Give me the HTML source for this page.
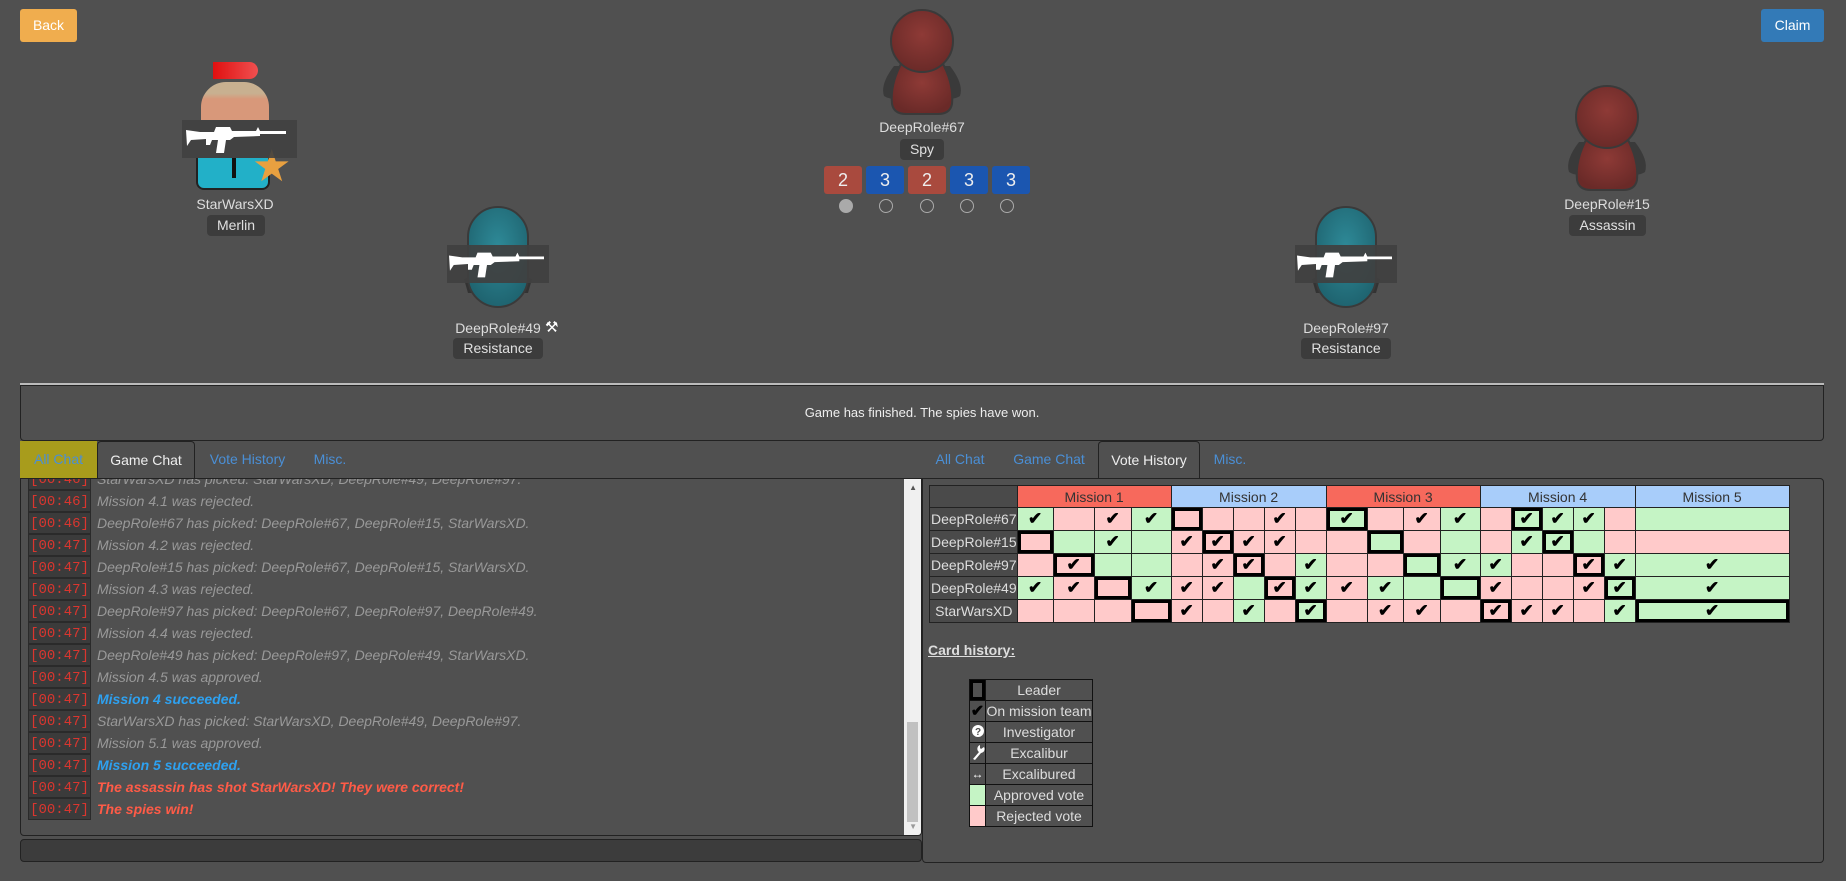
<!DOCTYPE html>
<html><head><meta charset="utf-8"><style>
*{box-sizing:border-box}
body{margin:0;width:1846px;height:881px;background:#505050;font-family:"Liberation Sans",sans-serif;color:#ddd;position:relative;overflow:hidden;font-size:14px}
.abs{position:absolute}
.btn{position:absolute;border-radius:3px;color:#fff;font-size:14px;text-align:center;line-height:33px}
.name{position:absolute;width:200px;text-align:center;font-size:14px;color:#ddd}
.lab{position:absolute;background:#3c3c3c;border-radius:4px;text-align:center;font-size:14px;color:#e0e0e0;height:21px;line-height:21px}
.mb{position:absolute;top:166px;width:38px;height:28px;border-radius:3px;color:#eee;font-size:18px;text-align:center;line-height:28px}
.mr{background:#a94a3e}.mbl{background:#1b56b0}
.dot{position:absolute;top:199px;width:14px;height:14px;border-radius:50%;border:1.5px solid #aaa}
.tab{position:absolute;top:441px;height:37px;line-height:37px;font-size:14px;color:#4a8fd6;text-align:center}
.tact{background:#505050;border:1px solid #222;border-bottom:none;border-radius:4px 4px 0 0;color:#eee}
.chat{position:absolute;left:20px;top:478px;width:902px;height:358px;border:1px solid #222;border-radius:0 0 4px 4px;overflow:hidden}
.row{position:absolute;left:7px;height:22px;line-height:22px;white-space:nowrap}
.ts{display:inline-block;width:63px;height:22px;background:#3b3b3b;border:1px solid #2a2a2a;color:#d9362f;font-family:"Liberation Mono",monospace;font-size:14px;text-align:center;vertical-align:top}
.tx{display:inline-block;padding-left:6px;font-style:italic;color:#999;font-size:14px}
.bl{color:#2ea1f0;font-weight:bold}.rd{color:#ff5b47;font-weight:bold}
table.v{position:absolute;left:929px;top:485px;border-collapse:collapse;table-layout:fixed}
table.v td{border:1px solid #222;height:23px;padding:0;text-align:center;font-size:17px;color:#000;font-weight:bold}
table.v td.n{background:#4a4a4a;color:#ddd;font-weight:normal;font-size:14px;text-align:left;padding-left:1px;white-space:nowrap;overflow:hidden}
table.v tr.h td{height:22px;font-weight:normal;font-size:14px;color:#333}
.g{background:#c5f4c5}.r{background:#ffcaca}
.L{box-shadow:inset 0 0 0 3px #000}
table.lg{position:absolute;left:969px;top:679px;border-collapse:collapse}
table.lg td{border:1px solid #111;height:21px;padding:0;font-size:14px;color:#ddd;text-align:center}
</style></head><body>
<div class="btn" style="left:20px;top:9px;width:57px;background:#f0ad4e">Back</div>
<div class="btn" style="left:1761px;top:9px;width:63px;background:#337ab7">Claim</div>

<svg width="0" height="0" style="position:absolute"><defs><radialGradient id="rg" cx="50%" cy="40%" r="60%"><stop offset="0" stop-color="#8e3a36"/><stop offset="1" stop-color="#6a2a28"/></radialGradient>
<radialGradient id="bg2" cx="50%" cy="40%" r="60%"><stop offset="0" stop-color="#2e8a98"/><stop offset="1" stop-color="#1f6470"/></radialGradient></defs></svg>

<svg class="abs" style="left:872px;top:4px" width="100" height="112" viewBox="0 0 100 112">
<path d="M22 62 Q8 80 12 92 Q18 96 26 94 L28 62 Z M78 62 Q92 80 88 92 Q82 96 74 94 L72 62 Z" fill="#3a3a3a"/>
<path d="M30 58 Q18 80 20 100 Q22 110 34 110 L66 110 Q78 110 80 100 Q82 80 70 58 Z" fill="url(#rg)" stroke="#3a3a3a" stroke-width="2"/>
<circle cx="50" cy="37" r="31" fill="url(#rg)" stroke="#3a3a3a" stroke-width="2"/>
</svg>
<div class="name" style="left:822px;top:119px">DeepRole#67</div>
<div class="lab" style="left:900px;top:139px;width:44px">Spy</div>
<div class="mb mr" style="left:824px">2</div><div class="mb mbl" style="left:866px">3</div><div class="mb mr" style="left:908px">2</div><div class="mb mbl" style="left:950px">3</div><div class="mb mbl" style="left:992px">3</div>
<div class="dot" style="left:839px;background:#aaa"></div><div class="dot" style="left:879px"></div><div class="dot" style="left:920px"></div><div class="dot" style="left:960px"></div><div class="dot" style="left:1000px"></div>

<svg class="abs" style="left:1557px;top:80px" width="100" height="112" viewBox="0 0 100 112">
<path d="M22 62 Q8 80 12 92 Q18 96 26 94 L28 62 Z M78 62 Q92 80 88 92 Q82 96 74 94 L72 62 Z" fill="#3a3a3a"/>
<path d="M30 58 Q18 80 20 100 Q22 110 34 110 L66 110 Q78 110 80 100 Q82 80 70 58 Z" fill="url(#rg)" stroke="#3a3a3a" stroke-width="2"/>
<circle cx="50" cy="37" r="31" fill="url(#rg)" stroke="#3a3a3a" stroke-width="2"/>
</svg>
<div class="name" style="left:1507px;top:196px">DeepRole#15</div>
<div class="lab" style="left:1569px;top:215px;width:77px">Assassin</div>

<div class="abs" style="left:213px;top:62px;width:45px;height:17px;background:linear-gradient(90deg,#e01010,#f05050);border-radius:0 9px 9px 0"></div>
<div class="abs" style="left:201px;top:82px;width:68px;height:38px;background:linear-gradient(#c8b090 0,#c8b090 30%,#d8987a 45%);border-radius:25px 25px 0 0"></div>
<div class="abs" style="left:196px;top:158px;width:74px;height:32px;background:#22b0c8;border-radius:0 0 8px 8px;border:2px solid #222;border-top:none"></div>
<div class="abs" style="left:232px;top:158px;width:4px;height:20px;background:#111"></div>
<div class="abs" style="left:252px;top:145px;font-size:44px;color:#e8a040;line-height:44px">★</div>
<div class="abs" style="left:182px;top:120px;width:115px;height:38px;background:rgba(64,64,64,.9)"></div>
<svg class="abs" style="left:186px;top:124px" width="100" height="32" viewBox="0 0 100 30"><path d="M0 5 L14 7 L28 7 L30 2 L44 2 L46 6 L70 6 L72 2 L74 6 L100 6 L100 9 L74 9 L74 11 L48 12 L44 15 L40 15 L38 28 L30 28 L32 15 L26 15 L24 20 L20 20 L20 14 L5 15 L1 21 Z" fill="#fff"/></svg>
<div class="name" style="left:135px;top:196px">StarWarsXD</div>
<div class="lab" style="left:207px;top:215px;width:58px">Merlin</div>

<svg class="abs" style="left:458px;top:205px" width="80" height="104" viewBox="0 0 80 104">
<path d="M6 74 L10 88 L18 88 L18 70 Z M74 74 L70 88 L62 88 L62 70 Z" fill="#333"/>
<rect x="10" y="2" width="60" height="100" rx="30" fill="url(#bg2)" stroke="#3a3a3a" stroke-width="2"/></svg>
<div class="abs" style="left:447px;top:245px;width:102px;height:38px;background:rgba(64,64,64,.92)"></div>
<svg class="abs" style="left:449px;top:249px" width="95" height="32" viewBox="0 0 100 30"><path d="M0 5 L14 7 L28 7 L30 2 L44 2 L46 6 L70 6 L72 2 L74 6 L100 6 L100 9 L74 9 L74 11 L48 12 L44 15 L40 15 L38 28 L30 28 L32 15 L26 15 L24 20 L20 20 L20 14 L5 15 L1 21 Z" fill="#fff"/></svg>
<div class="name" style="left:398px;top:320px">DeepRole#49</div>
<div class="abs" style="left:545px;top:318px;color:#fff;font-size:15px">⚒</div>
<div class="lab" style="left:453px;top:338px;width:90px">Resistance</div>

<svg class="abs" style="left:1306px;top:205px" width="80" height="104" viewBox="0 0 80 104">
<path d="M6 74 L10 88 L18 88 L18 70 Z M74 74 L70 88 L62 88 L62 70 Z" fill="#333"/>
<rect x="10" y="2" width="60" height="100" rx="30" fill="url(#bg2)" stroke="#3a3a3a" stroke-width="2"/></svg>
<div class="abs" style="left:1295px;top:245px;width:102px;height:38px;background:rgba(64,64,64,.92)"></div>
<svg class="abs" style="left:1297px;top:249px" width="95" height="32" viewBox="0 0 100 30"><path d="M0 5 L14 7 L28 7 L30 2 L44 2 L46 6 L70 6 L72 2 L74 6 L100 6 L100 9 L74 9 L74 11 L48 12 L44 15 L40 15 L38 28 L30 28 L32 15 L26 15 L24 20 L20 20 L20 14 L5 15 L1 21 Z" fill="#fff"/></svg>
<div class="name" style="left:1246px;top:320px">DeepRole#97</div>
<div class="lab" style="left:1301px;top:338px;width:90px">Resistance</div>

<div class="abs" style="left:20px;top:383px;width:1804px;height:2px;background:#bbb"></div>
<div class="abs" style="left:20px;top:385px;width:1804px;height:56px;border:1px solid #222;border-radius:0 0 4px 4px;text-align:center;line-height:54px;color:#eee;font-size:13px">Game has finished. The spies have won.</div>

<div class="tab" style="left:20px;width:77px;background:#a89c1c;color:#4a8fd6">All Chat</div>
<div class="tab tact" style="left:97px;width:98px">Game Chat</div>
<div class="tab" style="left:200px;width:95px">Vote History</div>
<div class="tab" style="left:305px;width:50px">Misc.</div>
<div class="chat">
<div class="row" style="top:-11px"><span class="ts">[00:46]</span><span class="tx">StarWarsXD has picked: StarWarsXD, DeepRole#49, DeepRole#97.</span></div>
<div class="row" style="top:11px"><span class="ts">[00:46]</span><span class="tx">Mission 4.1 was rejected.</span></div>
<div class="row" style="top:33px"><span class="ts">[00:46]</span><span class="tx">DeepRole#67 has picked: DeepRole#67, DeepRole#15, StarWarsXD.</span></div>
<div class="row" style="top:55px"><span class="ts">[00:47]</span><span class="tx">Mission 4.2 was rejected.</span></div>
<div class="row" style="top:77px"><span class="ts">[00:47]</span><span class="tx">DeepRole#15 has picked: DeepRole#67, DeepRole#15, StarWarsXD.</span></div>
<div class="row" style="top:99px"><span class="ts">[00:47]</span><span class="tx">Mission 4.3 was rejected.</span></div>
<div class="row" style="top:121px"><span class="ts">[00:47]</span><span class="tx">DeepRole#97 has picked: DeepRole#67, DeepRole#97, DeepRole#49.</span></div>
<div class="row" style="top:143px"><span class="ts">[00:47]</span><span class="tx">Mission 4.4 was rejected.</span></div>
<div class="row" style="top:165px"><span class="ts">[00:47]</span><span class="tx">DeepRole#49 has picked: DeepRole#97, DeepRole#49, StarWarsXD.</span></div>
<div class="row" style="top:187px"><span class="ts">[00:47]</span><span class="tx">Mission 4.5 was approved.</span></div>
<div class="row" style="top:209px"><span class="ts">[00:47]</span><span class="tx bl">Mission 4 succeeded.</span></div>
<div class="row" style="top:231px"><span class="ts">[00:47]</span><span class="tx">StarWarsXD has picked: StarWarsXD, DeepRole#49, DeepRole#97.</span></div>
<div class="row" style="top:253px"><span class="ts">[00:47]</span><span class="tx">Mission 5.1 was approved.</span></div>
<div class="row" style="top:275px"><span class="ts">[00:47]</span><span class="tx bl">Mission 5 succeeded.</span></div>
<div class="row" style="top:297px"><span class="ts">[00:47]</span><span class="tx rd">The assassin has shot StarWarsXD! They were correct!</span></div>
<div class="row" style="top:319px"><span class="ts">[00:47]</span><span class="tx rd">The spies win!</span></div>
<div class="abs" style="right:0;top:0;width:17px;height:358px;background:#f0f0f0"></div>
<div class="abs" style="right:3px;top:243px;width:11px;height:100px;background:#c1c1c1"></div>
<div class="abs" style="right:4px;top:4px;font-size:8px;color:#555">▲</div>
<div class="abs" style="right:4px;bottom:4px;font-size:8px;color:#999">▼</div>
</div>
<div class="abs" style="left:20px;top:839px;width:902px;height:23px;border:1px solid #222;border-radius:4px;background:#3c3c3c"></div>

<div class="tab" style="left:925px;width:70px">All Chat</div>
<div class="tab" style="left:1005px;width:88px">Game Chat</div>
<div class="tab tact" style="left:1098px;width:102px">Vote History</div>
<div class="tab" style="left:1205px;width:50px">Misc.</div>
<div class="abs" style="left:922px;top:478px;width:902px;height:385px;border:1px solid #222;border-radius:0 4px 4px 4px"></div>

<table class="v">
<colgroup><col style="width:87px"><col style="width:36px"><col style="width:41px"><col style="width:37px"><col style="width:40px"><col style="width:31px"><col style="width:31px"><col style="width:31px"><col style="width:31px"><col style="width:31px"><col style="width:41px"><col style="width:36px"><col style="width:37px"><col style="width:40px"><col style="width:31px"><col style="width:31px"><col style="width:31px"><col style="width:31px"><col style="width:31px"><col style="width:154px"></colgroup>
<tr class="h"><td class="n"></td><td colspan="4" style="background:#f7695c">Mission 1</td><td colspan="5" style="background:#a8cdfa">Mission 2</td><td colspan="4" style="background:#f7695c">Mission 3</td><td colspan="5" style="background:#a8cdfa">Mission 4</td><td style="background:#a8cdfa">Mission 5</td></tr>
<tr><td class="n">DeepRole#67</td><td class="g">✔</td><td class="r"></td><td class="r">✔</td><td class="g">✔</td><td class="r L"></td><td class="r"></td><td class="r"></td><td class="r">✔</td><td class="r"></td><td class="g L">✔</td><td class="r"></td><td class="r">✔</td><td class="g">✔</td><td class="r"></td><td class="g L">✔</td><td class="g">✔</td><td class="g">✔</td><td class="r"></td><td class="g"></td></tr>
<tr><td class="n">DeepRole#15</td><td class="r L"></td><td class="g"></td><td class="g">✔</td><td class="g"></td><td class="r">✔</td><td class="r L">✔</td><td class="r">✔</td><td class="r">✔</td><td class="r"></td><td class="r"></td><td class="g L"></td><td class="r"></td><td class="g"></td><td class="r"></td><td class="g">✔</td><td class="g L">✔</td><td class="g"></td><td class="r"></td><td class="r"></td></tr>
<tr><td class="n">DeepRole#97</td><td class="r"></td><td class="r L">✔</td><td class="g"></td><td class="g"></td><td class="r"></td><td class="r">✔</td><td class="r L">✔</td><td class="r"></td><td class="g">✔</td><td class="r"></td><td class="r"></td><td class="g L"></td><td class="g">✔</td><td class="g">✔</td><td class="r"></td><td class="r"></td><td class="r L">✔</td><td class="g">✔</td><td class="g">✔</td></tr>
<tr><td class="n">DeepRole#49</td><td class="g">✔</td><td class="r">✔</td><td class="r L"></td><td class="g">✔</td><td class="r">✔</td><td class="r">✔</td><td class="g"></td><td class="r L">✔</td><td class="g">✔</td><td class="r">✔</td><td class="g">✔</td><td class="g"></td><td class="g L"></td><td class="r">✔</td><td class="r"></td><td class="r"></td><td class="r">✔</td><td class="g L">✔</td><td class="g">✔</td></tr>
<tr><td class="n" style="text-align:center">StarWarsXD</td><td class="r"></td><td class="r"></td><td class="r"></td><td class="r L"></td><td class="r">✔</td><td class="r"></td><td class="g">✔</td><td class="r"></td><td class="g L">✔</td><td class="r"></td><td class="r">✔</td><td class="r">✔</td><td class="r"></td><td class="r L">✔</td><td class="r">✔</td><td class="r">✔</td><td class="r"></td><td class="g">✔</td><td class="g L">✔</td></tr>
</table>

<div class="abs" style="left:928px;top:642px;font-weight:bold;text-decoration:underline;font-size:14px;color:#ddd">Card history:</div>
<table class="lg">
<tr><td style="width:16px;box-shadow:inset 0 0 0 3px #000"></td><td style="width:107px">Leader</td></tr>
<tr><td style="color:#000;font-weight:bold;font-size:16px">✔</td><td>On mission team</td></tr>
<tr><td><svg width="14" height="14" viewBox="0 0 14 14"><circle cx="7" cy="7" r="6" fill="#fff"/><text x="7" y="11" font-size="10" font-weight="bold" text-anchor="middle" fill="#505050" font-family="Liberation Sans">?</text></svg></td><td>Investigator</td></tr>
<tr><td><svg width="14" height="16" viewBox="0 0 14 16"><path d="M9 1 A4 4 0 0 0 8 8 L2 15 L4 16 L10 9 A4 4 0 0 0 13 3 L10 5 L9 4 Z" fill="#fff"/></svg></td><td>Excalibur</td></tr>
<tr><td style="color:#fff;font-size:12px">↔</td><td>Excalibured</td></tr>
<tr><td style="background:#c5f4c5"></td><td>Approved vote</td></tr>
<tr><td style="background:#ffcaca"></td><td>Rejected vote</td></tr>
</table>
</body></html>
